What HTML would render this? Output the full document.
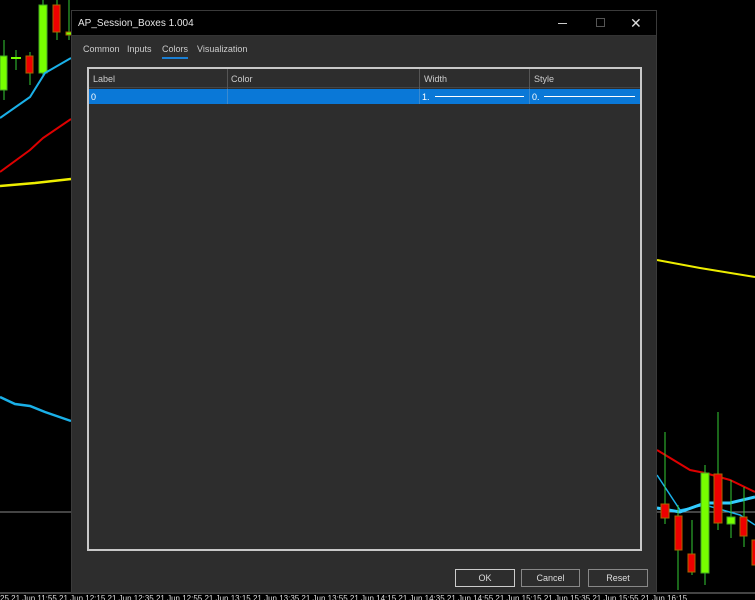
<!DOCTYPE html>
<html><head><meta charset="utf-8"><style>
*{margin:0;padding:0;box-sizing:border-box}
body{width:755px;height:600px;background:#000;position:relative;overflow:hidden;font-family:"Liberation Sans",sans-serif;font-size:9px;color:#ddd}
.a{position:absolute}
</style></head><body>
<svg class="a" style="left:0;top:0" width="755" height="600">
 <!-- left chart -->
 <line x1="4" y1="40" x2="4" y2="100" stroke="#3c3" />
 <rect x="0" y="56" width="7" height="34" fill="#7f0" stroke="#4a2"/>
 <line x1="16" y1="50" x2="16" y2="70" stroke="#3c3"/><line x1="11" y1="58" x2="21" y2="58" stroke="#7f0" stroke-width="2"/>
 <line x1="30" y1="52" x2="30" y2="85" stroke="#3c3"/><rect x="26" y="56" width="7" height="17" fill="#e00" stroke="#a60"/>
 <line x1="43" y1="0" x2="43" y2="75" stroke="#3c3"/><rect x="39" y="5" width="8" height="68" fill="#7f0" stroke="#4a2"/>
 <line x1="57" y1="0" x2="57" y2="40" stroke="#3c3"/><rect x="53" y="5" width="7" height="27" fill="#e00" stroke="#a60"/>
 <line x1="69" y1="0" x2="69" y2="40" stroke="#3c3"/><rect x="66" y="32" width="6" height="3" fill="#7f0" stroke="#a60"/>
 <polyline points="0,118 30,97 45,73 71,58" fill="none" stroke="#1ab0e8" stroke-width="2"/>
 <polyline points="0,172 30,150 43,138 71,119" fill="none" stroke="#d00" stroke-width="2"/>
 <polyline points="0,186 35,183 71,179" fill="none" stroke="#ee0" stroke-width="2.5"/>
 <polyline points="0,397 15,404 30,406 45,412 71,421" fill="none" stroke="#1ab0e8" stroke-width="2.5"/>
 <line x1="0" y1="512" x2="71" y2="512" stroke="#888"/>
 <!-- right chart -->
 <polyline points="657,260 700,268 755,277" fill="none" stroke="#ee0" stroke-width="2"/>
 <line x1="657" y1="512" x2="755" y2="512" stroke="#888"/>
 <polyline points="657,450 690,470 705,473 730,480 755,492" fill="none" stroke="#d00" stroke-width="2"/>
 <polyline points="657,475 680,510 690,508 705,505 740,515 755,525" fill="none" stroke="#1ab0e8" stroke-width="1.5"/>
 <polyline points="657,508 680,512 705,503 730,503 755,497" fill="none" stroke="#3cf" stroke-width="3"/>
 <line x1="665" y1="432" x2="665" y2="524" stroke="#3c3"/><rect x="661" y="504" width="8" height="14" fill="#e00" stroke="#a60"/>
 <line x1="678" y1="505" x2="678" y2="590" stroke="#3c3"/><rect x="675" y="516" width="7" height="34" fill="#e00" stroke="#a60"/>
 <line x1="692" y1="520" x2="692" y2="575" stroke="#3c3"/><rect x="688" y="554" width="7" height="18" fill="#e00" stroke="#a60"/>
 <line x1="705" y1="465" x2="705" y2="585" stroke="#3c3"/><rect x="701" y="473" width="8" height="100" fill="#7f0" stroke="#4a2"/>
 <line x1="718" y1="412" x2="718" y2="530" stroke="#3c3"/><rect x="714" y="474" width="8" height="49" fill="#e00" stroke="#a60"/>
 <line x1="731" y1="480" x2="731" y2="538" stroke="#3c3"/><rect x="727" y="517" width="8" height="7" fill="#7f0" stroke="#4a2"/>
 <line x1="744" y1="487" x2="744" y2="547" stroke="#3c3"/><rect x="740" y="517" width="7" height="19" fill="#e00" stroke="#a60"/>
 <rect x="752" y="540" width="5" height="25" fill="#e00" stroke="#a60"/>
 <!-- axis -->
 <line x1="0" y1="593" x2="755" y2="593" stroke="#888"/>
 <g fill="#ddd" font-size="8" font-family="Liberation Sans">
  <text x="0" y="601">25  21 Jun 11:55  21 Jun 12:15  21 Jun 12:35  21 Jun 12:55  21 Jun 13:15  21 Jun 13:35  21 Jun 13:55  21 Jun 14:15  21 Jun 14:35  21 Jun 14:55  21 Jun 15:15  21 Jun 15:35  21 Jun 15:55  21 Jun 16:15</text>
 </g>
</svg>
<!-- dialog -->
<div class="a" style="left:71px;top:10px;width:586px;height:583px;background:#2d2d2d;border:1px solid #3a3a3a">
 <div class="a" style="left:0;top:0;width:584px;height:25px;background:#000;border-bottom:1px solid #333">
  <div class="a" style="left:6px;top:7px;font-size:10px;color:#e6e6e6">AP_Session_Boxes 1.004</div>
  <div class="a" style="left:486px;top:12px;width:9px;height:1px;background:#ccc"></div>
  <div class="a" style="left:524px;top:7px;width:9px;height:9px;border:1px solid #555"></div>
  <div class="a" style="left:558px;top:4px;font-size:14px;color:#ddd">✕</div>
 </div>
 <div class="a" style="left:11px;top:33px;color:#ccc">Common</div>
 <div class="a" style="left:55px;top:33px;color:#ccc">Inputs</div>
 <div class="a" style="left:90px;top:33px;color:#ccc">Colors</div>
 <div class="a" style="left:90px;top:46px;width:26px;height:2px;background:#1a7fd4"></div>
 <div class="a" style="left:125px;top:33px;color:#ccc">Visualization</div>
 <div class="a" style="left:15px;top:56px;width:555px;height:484px;border:2px solid #c8c8c8;background:#2d2d2d">
  <div class="a" style="left:0;top:0;width:551px;height:19px;border-bottom:1px solid #444"></div>
  <div class="a" style="left:138px;top:0;width:1px;height:35px;background:#555"></div>
  <div class="a" style="left:330px;top:0;width:1px;height:35px;background:#555"></div>
  <div class="a" style="left:440px;top:0;width:1px;height:35px;background:#555"></div>
  <div class="a" style="left:4px;top:5px;color:#ccc">Label</div>
  <div class="a" style="left:142px;top:5px;color:#ccc">Color</div>
  <div class="a" style="left:335px;top:5px;color:#ccc">Width</div>
  <div class="a" style="left:445px;top:5px;color:#ccc">Style</div>
  <div class="a" style="left:0;top:20px;width:551px;height:15px;background:#0a78d7"></div>
  <div class="a" style="left:138px;top:20px;width:1px;height:15px;background:#3a8ad0"></div>
  <div class="a" style="left:330px;top:20px;width:1px;height:15px;background:#3a8ad0"></div>
  <div class="a" style="left:440px;top:20px;width:1px;height:15px;background:#3a8ad0"></div>
  <div class="a" style="left:2px;top:23px;color:#fff">0</div>
  <div class="a" style="left:333px;top:23px;color:#fff">1.</div>
  <div class="a" style="left:346px;top:27px;width:89px;height:1px;background:#fff"></div>
  <div class="a" style="left:443px;top:23px;color:#fff">0.</div>
  <div class="a" style="left:455px;top:27px;width:91px;height:1px;background:#fff"></div>
 </div>
 <div class="a" style="left:383px;top:558px;width:60px;height:18px;border:1px solid #ccc;color:#ddd;text-align:center;line-height:16px">OK</div>
 <div class="a" style="left:449px;top:558px;width:59px;height:18px;border:1px solid #888;color:#ddd;text-align:center;line-height:16px">Cancel</div>
 <div class="a" style="left:516px;top:558px;width:60px;height:18px;border:1px solid #888;color:#ddd;text-align:center;line-height:16px">Reset</div>
</div>
</body></html>
